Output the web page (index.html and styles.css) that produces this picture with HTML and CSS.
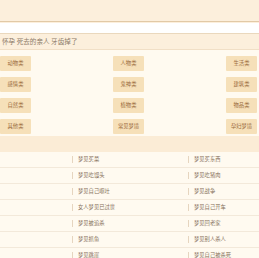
FILE: index.html
```
<!DOCTYPE html>
<html lang="zh-CN">
<head>
  <meta charset="UTF-8">
  <title>周公解梦</title>
  <link rel="stylesheet" href="styles.css">
</head>
<body>
  <div class="head">
    <div class="top"></div>
    <input class="search" type="text">
    <div class="hot">怀孕 死去的亲人 牙齿掉了</div>
  </div>

  <div class="cats">
    <a class="cat">动物类</a><a class="cat">人物类</a><a class="cat">生活类</a>
    <a class="cat">感情类</a><a class="cat">鬼神类</a><a class="cat">建筑类</a>
    <a class="cat">自然类</a><a class="cat">植物类</a><a class="cat">物品类</a>
    <a class="cat">其他类</a><a class="cat">常见梦境</a><a class="cat">孕妇梦境</a>
  </div>

  <div class="band"></div>

  <div class="list-wrap">
    <ul class="list">
      <li><span>梦见生孩子</span></li><li><span>梦见买菜</span></li><li><span>梦见买东西</span></li>
      <li><span>梦见蛇咬</span></li><li><span>梦见吃馒头</span></li><li><span>梦见吃猪肉</span></li>
      <li><span>梦见下雨</span></li><li><span>梦见自己呕吐</span></li><li><span>梦见战争</span></li>
      <li><span>梦见考试</span></li><li><span>女人梦见已过世</span></li><li><span>梦见自己开车</span></li>
      <li><span>梦见被人追</span></li><li><span>梦见被追杀</span></li><li><span>梦见回老家</span></li>
      <li><span>梦见发大水</span></li><li><span>梦见抓鱼</span></li><li><span>梦见别人杀人</span></li>
      <li><span>梦见着火</span></li><li><span>梦见跳崖</span></li><li><span>梦见自己被杀死</span></li>
    </ul>
  </div>
</body>
</html>
```

FILE: styles.css
```
body {
  margin: 0;
  background: #fffaf0;
  font-family: "Noto Sans CJK SC", "Noto Sans", sans-serif;
  overflow: hidden;
}
.head {
  background: #fcefdc;
  border-bottom: 1px solid #f1dfc6;
}
.top {
  height: 21px;
  border-bottom: 1px solid #e2c9a6;
}
.search {
  display: block;
  box-sizing: border-box;
  width: 100%;
  height: 11px;
  margin: 1px 0 0;
  padding: 0;
  border: none;
  border-bottom: 1px solid #ead8bd;
  background: #fff;
}
.hot {
  height: 15px;
  line-height: 15px;
  padding-left: 2px;
  font-size: 6.6px;
  color: #8c7b69;
}
.cats {
  display: grid;
  grid-template-columns: repeat(3, 31px);
  justify-content: space-between;
  row-gap: 6px;
  padding: 6px 2px 0 0;
}
.cat {
  height: 15px;
  line-height: 15px;
  text-align: center;
  font-size: 5.3px;
  color: #9b6b3d;
  background: #f6e0b9;
  border-radius: 1px;
}
.band {
  height: 16px;
  margin-top: 2px;
  background: #fbecd6;
}
.list-wrap {
  overflow: hidden;
}
.list {
  display: grid;
  grid-template-columns: repeat(3, 116px);
  margin: 0 0 0 -44px;
  padding: 0;
  list-style: none;
}
.list li {
  height: 15px;
  line-height: 15px;
  border-bottom: 1px solid #f3e9da;
  font-size: 5.3px;
  color: #86705a;
}
.list span {
  display: inline-block;
  line-height: 7px;
  padding-left: 5px;
  border-left: 1px solid #e6d5bf;
  vertical-align: middle;
}
```
